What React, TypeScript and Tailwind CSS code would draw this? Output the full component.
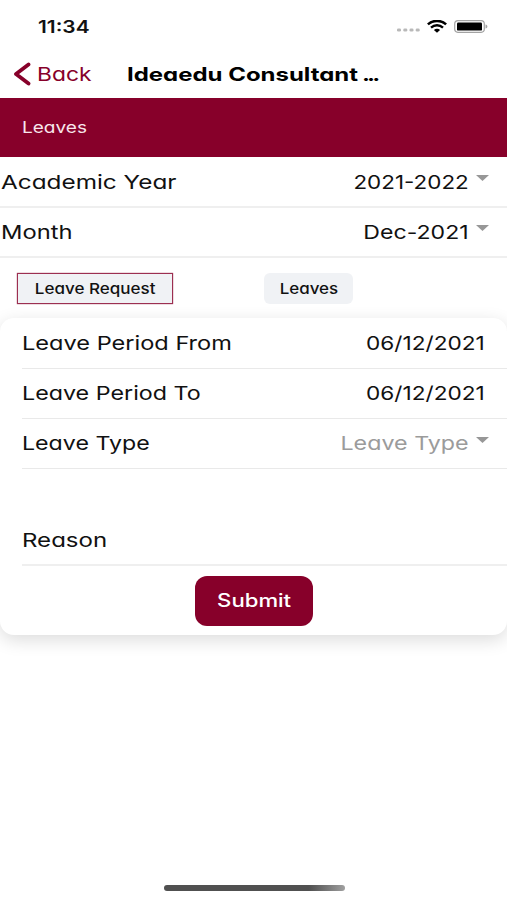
import React from "react";

interface RowProps {
  label: React.ReactNode;
  value?: React.ReactNode;
  caret?: boolean;
  className?: string;
  labelClass?: string;
  valueClass?: string;
}

const Caret: React.FC = () => (
  <svg className="w-[13px] h-[6px] ml-[7px] mb-[8px]" viewBox="0 0 13 6">
    <path d="M0 0H13L6.5 6Z" fill="#979797" />
  </svg>
);

const StatusBar: React.FC = () => (
  <div className="h-[50px] pt-[3px] pl-[38px] pr-[19px] flex items-center justify-between">
    <span className="pt-px text-[17px] leading-none font-semibold origin-left scale-x-[1.23]">
      11:34
    </span>
    <div className="flex items-center">
      <svg className="w-6 h-1 mt-[7px] mr-[7px]" viewBox="0 0 24 4" fill="#b9b9b9">
        <rect x="1" y="0.5" width="4" height="3" rx="1.3" />
        <rect x="7.3" y="0.5" width="4" height="3" rx="1.3" />
        <rect x="13.5" y="0.5" width="4" height="3" rx="1.3" />
        <rect x="19.7" y="0.5" width="4" height="3" rx="1.3" />
      </svg>
      <svg className="w-5 h-[13px] mr-[7px]" viewBox="0 0 20 13" fill="none">
        <path d="M0.9 4.4C6 -0.2 14 -0.2 19.1 4.4" stroke="#000" strokeWidth="2.6" />
        <path d="M4 7.6C7.5 4.5 12.5 4.5 16 7.6" stroke="#000" strokeWidth="2.4" />
        <path d="M6.9 10C8.7 8.3 11.3 8.3 13.1 10L10 12.8Z" fill="#000" />
      </svg>
      <svg className="w-[34px] h-[13px]" viewBox="0 0 34 13">
        <rect x="0.7" y="0.7" width="29.6" height="11.6" rx="3.2" fill="#fff" stroke="#a3a3a3" strokeWidth="1.2" />
        <rect x="3" y="2.6" width="25" height="8" rx="1.2" fill="#000" />
        <path d="M31.5 4.5C34 5 34 8 31.5 8.5Z" fill="#a3a3a3" />
      </svg>
    </div>
  </div>
);

const Header: React.FC = () => (
  <header className="h-12 flex items-center">
    <button className="w-[127px] h-full pl-[13px] flex items-center text-[#87002a]">
      <svg className="w-[18px] h-6 mr-[6px]" viewBox="0 0 18 24" fill="none">
        <path d="M15.5 2.5L3 12L15.5 21.5" stroke="currentColor" strokeWidth="3.8" strokeLinecap="round" strokeLinejoin="round" />
      </svg>
      <span className="text-[19px] leading-none origin-left scale-x-[1.2]">Back</span>
    </button>
    <h1 className="text-[18.5px] leading-none font-bold whitespace-nowrap text-black origin-left scale-x-[1.295]">
      Ideaedu Consultant<span className="ml-[3px] tracking-[-2.2px]">...</span>
    </h1>
  </header>
);

const Row: React.FC<RowProps> = ({
  label,
  value,
  caret,
  className = "",
  labelClass = "scale-x-[1.235]",
  valueClass = "scale-x-[1.2]",
}) => (
  <div
    className={`flex items-center justify-between text-[19px] leading-none whitespace-nowrap ${className}`}
  >
    <span className={`origin-left ${labelClass}`}>{label}</span>
    {value && (
      <span className="flex items-center">
        <span className={`origin-right ${valueClass}`}>{value}</span>
        {caret && <Caret />}
      </span>
    )}
  </div>
);

const App: React.FC = () => {
  return (
    <div className="w-full h-[900px] overflow-hidden flex flex-col bg-white text-[#111] font-['Inter','Liberation_Sans',sans-serif] [font-feature-settings:'cv11']">
      <StatusBar />
      <Header />

      <div className="h-[59px] pl-[22px] pb-px flex items-center bg-[#87002a] text-[#f8e6ec]">
        <span className="text-[16px] leading-none origin-left scale-x-[1.19]">Leaves</span>
      </div>

      <Row
        className="h-[51px] pt-px pl-[1px] pr-[18px] border-b-2 border-[#efefef]"
        label="Academic Year"
        labelClass="scale-x-[1.28]"
        value="2021-2022"
        valueClass="scale-x-[1.18]"
        caret
      />
      <Row
        className="h-[50px] pl-[1px] pr-[18px] border-b-2 border-[#efefef]"
        label="Month"
        labelClass="scale-x-[1.25]"
        value="Dec-2021"
        valueClass="scale-x-[1.215]"
        caret
      />

      {/* Tabs */}
      <div className="h-[60px] pt-[15px] pl-[17px] flex items-start text-[15px] leading-none font-medium">
        <button className="w-[156px] h-[31px] mr-[91px] border border-[#9c2f51] bg-[#f0f2f5] shadow-[0_0_1px_#9c2f51] whitespace-nowrap">
          <span className="inline-block scale-x-[1.135]">Leave Request</span>
        </button>
        <button className="w-[89px] h-[31px] rounded-md bg-[#f0f2f5]">
          <span className="inline-block scale-x-[1.13]">Leaves</span>
        </button>
      </div>

      {/* Leave request form */}
      <section className="h-[317px] pl-[22px] rounded-[14px] bg-white shadow-[0_5px_18px_rgba(0,0,0,0.14)] flex flex-col">
        <Row
          className="h-[51px] pr-[22px] border-b border-[#e9e9e9]"
          label="Leave Period From"
          labelClass="scale-x-[1.24]"
          value="06/12/2021"
          valueClass="scale-x-[1.19]"
        />
        <Row
          className="h-[50px] pr-[22px] border-b border-[#e9e9e9]"
          label="Leave Period To"
          labelClass="scale-x-[1.225]"
          value="06/12/2021"
          valueClass="scale-x-[1.19]"
        />
        <Row
          className="h-[50px] pr-[18px] border-b border-[#e9e9e9]"
          label="Leave Type"
          labelClass="scale-x-[1.22]"
          value={<span className="text-[#9b9b9b]">Leave Type</span>}
          valueClass="scale-x-[1.225]"
          caret
        />
        <Row
          className="h-[97px] pt-[47px] border-b-2 border-[#efefef]"
          label="Reason"
          labelClass="scale-x-[1.265]"
        />
        <button className="w-[118px] h-[50px] mt-[10px] ml-[173px] rounded-[12px] bg-[#87002a] text-white">
          <span className="inline-block text-[18px] leading-none font-medium scale-x-[1.23]">
            Submit
          </span>
        </button>
      </section>

      {/* Home indicator */}
      <div className="w-[181px] h-[6px] mt-auto mb-[9px] ml-[164px] rounded-full bg-linear-to-r from-[#505050] from-80% to-[#a0a0a0]" />
    </div>
  );
};

export default App;
